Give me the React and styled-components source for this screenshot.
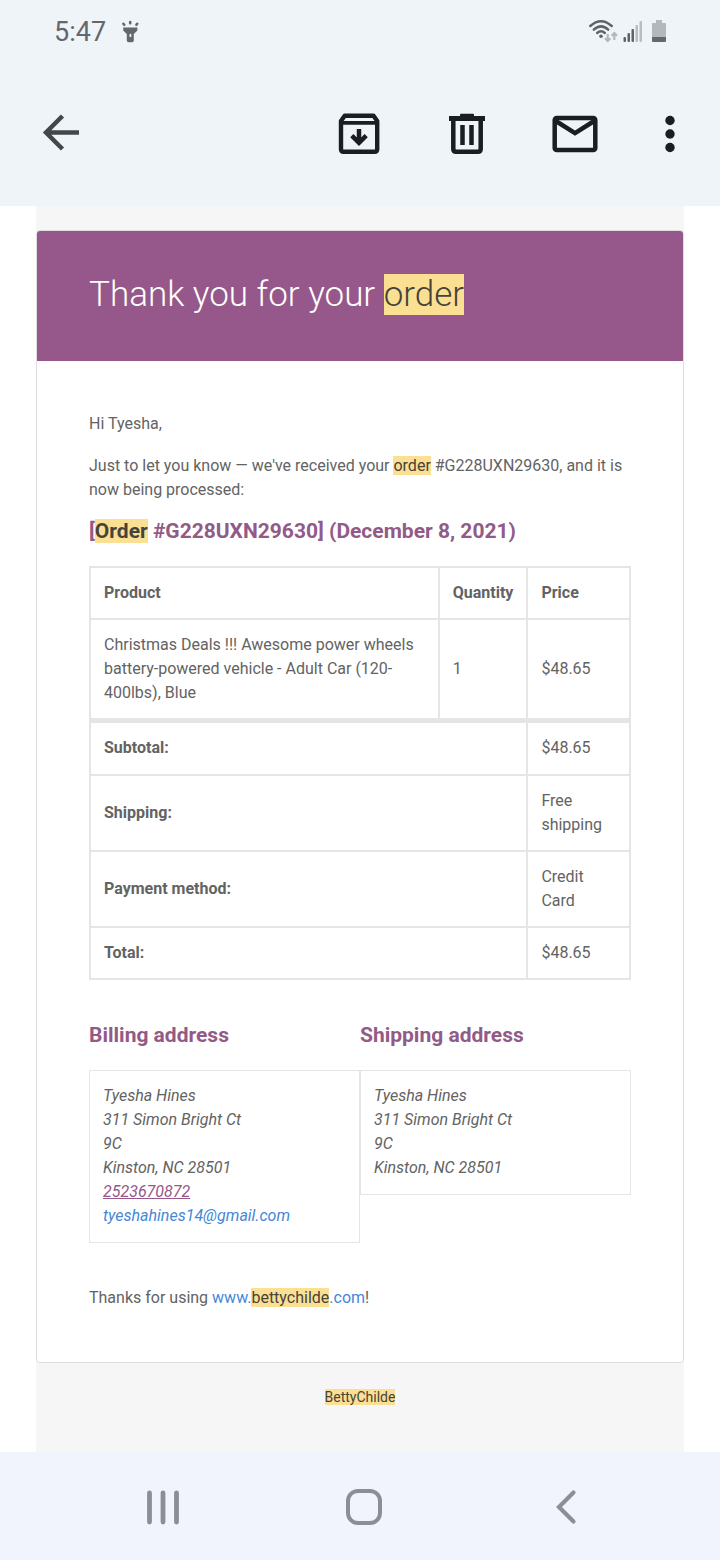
import React from 'react';
import styled, { createGlobalStyle } from 'styled-components';

const GlobalStyle = createGlobalStyle`
  * {
    box-sizing: border-box;
  }
  body {
    margin: 0;
    background: #fff;
    color: #636363;
    font-family: Roboto, 'Liberation Sans', sans-serif;
    font-size: 16px;
    line-height: 24px;
  }
  p {
    margin: 0 0 18px;
  }
`;

const Screen = styled.div`
  display: flex;
  flex-direction: column;
  min-height: 100vh;
`;

const TopArea = styled.header`
  background: #eff4f9;
  padding-bottom: 48px;
`;

const StatusBar = styled.div`
  display: flex;
  justify-content: space-between;
  align-items: center;
  height: 64px;
  padding: 0 53px 0 54px;
  color: #64676b;
`;

const StatusGroup = styled.div`
  display: flex;
  align-items: center;
  gap: ${(props) => props.$gap}px;
`;

const Clock = styled.span`
  font-size: 27px;
  line-height: 32px;
`;

const Toolbar = styled.div`
  display: flex;
  align-items: center;
  gap: 60px;
  padding: 46px 39px 0 37px;
`;

const IconButton = styled.button`
  display: flex;
  padding: 0;
  border: 0;
  background: none;
  color: ${(props) => props.$color || '#1b1e21'};
  cursor: pointer;

  &.back {
    margin-right: auto;
  }
`;

const Mail = styled.main`
  flex: 1;
  margin: 0 5%;
  padding-top: 24px;
  background: #f6f6f6;
`;

const Card = styled.article`
  border: 1px solid #dedede;
  border-radius: 4px;
  background: #fff;
  overflow: hidden;
`;

const Banner = styled.div`
  padding: 38px 52px 41px;
  background: #96588a;
`;

const Title = styled.h1`
  margin: 0;
  color: #fff;
  font-size: 35px;
  font-weight: 300;
  line-height: 51px;
`;

const CardBody = styled.div`
  padding: 51px 52px 34px;
`;

const Heading = styled.h2`
  margin: 0 0 24px;
  color: #925a87;
  font-size: 21px;
  font-weight: 700;
  line-height: 22px;
`;

const Mark = styled.mark`
  background: #fbe094;
  color: #47433a;
`;

const OrderTable = styled.table`
  width: 100%;
  margin-bottom: 44px;
  border: 1px solid #e5e5e5;
  border-spacing: 0;

  th,
  td {
    padding: 13px;
    border: 1px solid #e5e5e5;
    text-align: left;
    vertical-align: middle;
  }
  .price {
    width: 19%;
  }
  .quantity {
    width: 16%;
  }
  tfoot tr:first-child > * {
    border-top-width: 4px;
    padding-bottom: 14px;
  }
`;

const Addresses = styled.div`
  display: grid;
  grid-template-columns: 1fr 1fr;
  align-items: start;
  margin-bottom: 43px;
`;

const Address = styled.address`
  padding: 13px 13px 14px;
  border: 1px solid #e5e5e5;
`;

const Link = styled.a`
  color: #4687d6;
  text-decoration: none;
`;

const PhoneLink = styled.a`
  color: #96588a;
`;

const MailFooter = styled.footer`
  padding: 22px 0;
  font-size: 14px;
  text-align: center;
`;

const NavBar = styled.nav`
  display: flex;
  justify-content: space-between;
  align-items: center;
  height: 108px;
  padding: 0 130px 0 139px;
  background: #f1f4fd;
`;

const totals = [
  { label: 'Subtotal:', value: '$48.65' },
  { label: 'Shipping:', value: 'Free shipping' },
  { label: 'Payment method:', value: 'Credit Card' },
  { label: 'Total:', value: '$48.65' },
];

const addressLines = [
  'Tyesha Hines',
  '311 Simon Bright Ct',
  '9C',
  'Kinston, NC 28501',
];

const FlashlightIcon = () => (
  <svg width="20" height="24" viewBox="0 0 20 24" fill="currentColor">
    <path d="M3.200 7.500h14.200v3L13.800 14v6.500q0 1.700-1.700 1.700H8.500q-1.700 0-1.700-1.700V14L3.200 10.500z" />
    <rect x="9.500" y="13.800" width="1.800" height="3.400" rx="0.900" fill="#eff4f9" />
    <path
      d="M10.200 2v1.200M3.400 3.800l.8 1M17.200 3.800l-.8 1"
      stroke="currentColor"
      strokeWidth="2.600"
      strokeLinecap="round"
    />
  </svg>
);

const WifiIcon = () => (
  <svg width="30" height="26" viewBox="0 0 30 26" fill="none">
    <g stroke="#5f6266" strokeWidth="2.500" strokeLinecap="round">
      <path d="M2.300 7Q13 -2.600 23.700 7" />
      <path d="M5.800 10.700Q13 4 20.200 10.700" />
      <path d="M9.200 14Q13 10.600 16.800 14" />
    </g>
    <circle cx="13" cy="17.300" r="1.800" fill="#5f6266" />
    <path
      d="M19.700 15v6.500M17 19.300l2.700 2.700 2.700-2.700M26.300 21v-6.500M23.600 16.700L26.300 14l2.700 2.700"
      stroke="#b4b7bc"
      strokeWidth="2.200"
    />
  </svg>
);

const SignalIcon = () => (
  <svg width="25" height="24" viewBox="0 0 25 24">
    <g fill="#5f6266">
      <rect x="1.500" y="17" width="2.500" height="5" rx="1" />
      <rect x="5.500" y="13" width="2.500" height="9" rx="1" />
      <rect x="9.500" y="9" width="2.500" height="13" rx="1" />
    </g>
    <g fill="#b9bcc1">
      <rect x="13.500" y="5" width="2.500" height="17" rx="1" />
      <rect x="17.500" y="1" width="2.500" height="21" rx="1" />
    </g>
  </svg>
);

const BatteryIcon = () => (
  <svg width="16" height="24" viewBox="0 0 16 24">
    <path d="M5 0h6v3h3q1 0 1 1v13H1V4q0-1 1-1h3z" fill="#b4b7bc" />
    <path d="M1 17h14v4q0 1-1 1H2q-1 0-1-1z" fill="#64676b" />
  </svg>
);

const BackIcon = () => (
  <svg width="48" height="48" viewBox="0 0 48 48" fill="none">
    <path
      d="M42 22.500H9M25.500 6L9 22.500 25.500 39"
      stroke="currentColor"
      strokeWidth="4.500"
    />
  </svg>
);

const ArchiveIcon = () => (
  <svg width="48" height="48" viewBox="0 0 48 48" fill="none">
    <path
      d="M6 11v28.200q0 2.600 2.600 2.600h31q2.600 0 2.600-2.600V11l-3.700-5.200H9.700z"
      stroke="currentColor"
      strokeWidth="4.400"
      strokeLinejoin="round"
    />
    <path d="M6 12.800h36" stroke="currentColor" strokeWidth="3.800" />
    <path
      d="M24 19v14M16.800 25.700l7.200 7.200 7.200-7.200"
      stroke="currentColor"
      strokeWidth="4.500"
    />
  </svg>
);

const TrashIcon = () => (
  <svg width="48" height="48" viewBox="0 0 48 48" fill="none">
    <path d="M17 6V4.700q0-1 1-1h12q1 0 1 1V6h11v5H6V6z" fill="currentColor" />
    <path
      d="M10.300 10v29q0 2.700 2.700 2.700h22q2.700 0 2.700-2.700V10M19.500 15v20M28.500 15v20"
      stroke="currentColor"
      strokeWidth="4.500"
    />
  </svg>
);

const EnvelopeIcon = () => (
  <svg width="48" height="48" viewBox="0 0 48 48" fill="none">
    <rect
      x="3.700"
      y="8"
      width="40.600"
      height="32"
      rx="2"
      stroke="currentColor"
      strokeWidth="4.500"
    />
    <path d="M4 10.500l20 12.700 20-12.700" stroke="currentColor" strokeWidth="4.500" />
  </svg>
);

const MoreIcon = () => (
  <svg width="22" height="48" viewBox="0 0 22 48" fill="currentColor">
    <circle cx="11" cy="10.500" r="4.700" />
    <circle cx="11" cy="24" r="4.700" />
    <circle cx="11" cy="37.500" r="4.700" />
  </svg>
);

const RecentIcon = () => (
  <svg width="48" height="48" viewBox="0 0 48 48" fill="none">
    <path
      d="M10.500 11v29M24 11v29M37.500 11v29"
      stroke="currentColor"
      strokeWidth="4.800"
      strokeLinecap="round"
    />
  </svg>
);

const HomeIcon = () => (
  <svg width="48" height="48" viewBox="0 0 48 48" fill="none">
    <rect
      x="7"
      y="9"
      width="32"
      height="32"
      rx="10"
      stroke="currentColor"
      strokeWidth="4"
    />
  </svg>
);

const NavBackIcon = () => (
  <svg width="48" height="48" viewBox="0 0 48 48" fill="none">
    <path
      d="M31.500 10.500L17 25l14.500 14.500"
      stroke="currentColor"
      strokeWidth="4.200"
      strokeLinecap="round"
    />
  </svg>
);

const OrderSummary = () => (
  <OrderTable>
    <thead>
      <tr>
        <th scope="col">Product</th>
        <th scope="col" className="quantity">
          Quantity
        </th>
        <th scope="col" className="price">
          Price
        </th>
      </tr>
    </thead>
    <tbody>
      <tr>
        <td>
          Christmas Deals !!! Awesome power wheels battery-powered vehicle -
          Adult Car (120-400lbs), Blue
        </td>
        <td>1</td>
        <td>$48.65</td>
      </tr>
    </tbody>
    <tfoot>
      {totals.map((item) => (
        <tr key={item.label}>
          <th scope="row" colSpan="2">
            {item.label}
          </th>
          <td>{item.value}</td>
        </tr>
      ))}
    </tfoot>
  </OrderTable>
);

const AddressBlock = ({ title, children }) => (
  <section>
    <Heading>{title}</Heading>
    <Address>
      {addressLines.map((line) => (
        <div key={line}>{line}</div>
      ))}
      {children}
    </Address>
  </section>
);

const App = () => {
  return (
    <Screen>
      <GlobalStyle />
      <TopArea>
        <StatusBar>
          <StatusGroup $gap={14}>
            <Clock>5:47</Clock>
            <FlashlightIcon />
          </StatusGroup>
          <StatusGroup $gap={4}>
            <WifiIcon />
            <SignalIcon />
            <BatteryIcon />
          </StatusGroup>
        </StatusBar>
        <Toolbar>
          <IconButton className="back" $color="#43474a" aria-label="Back">
            <BackIcon />
          </IconButton>
          <IconButton aria-label="Archive">
            <ArchiveIcon />
          </IconButton>
          <IconButton aria-label="Delete">
            <TrashIcon />
          </IconButton>
          <IconButton aria-label="Mark as unread">
            <EnvelopeIcon />
          </IconButton>
          <IconButton aria-label="More options">
            <MoreIcon />
          </IconButton>
        </Toolbar>
      </TopArea>

      <Mail>
        <Card>
          <Banner>
            <Title>
              Thank you for your <Mark>order</Mark>
            </Title>
          </Banner>
          <CardBody>
            <p>Hi Tyesha,</p>
            <p>
              Just to let you know — we've received your <Mark>order</Mark>{' '}
              #G228UXN29630, and it is now being processed:
            </p>
            <Heading>
              [<Mark>Order</Mark> #G228UXN29630] (December 8, 2021)
            </Heading>
            <OrderSummary />
            <Addresses>
              <AddressBlock title="Billing address">
                <div>
                  <PhoneLink href="tel:2523670872">2523670872</PhoneLink>
                </div>
                <div>
                  <Link href="mailto:tyeshahines14@gmail.com">
                    tyeshahines14@gmail.com
                  </Link>
                </div>
              </AddressBlock>
              <AddressBlock title="Shipping address" />
            </Addresses>
            <p>
              Thanks for using{' '}
              <Link href="#">
                www.<Mark>bettychilde</Mark>.com
              </Link>
              !
            </p>
          </CardBody>
        </Card>
        <MailFooter>
          <Mark>BettyChilde</Mark>
        </MailFooter>
      </Mail>

      <NavBar>
        <IconButton $color="#8b8f95" aria-label="Recent apps">
          <RecentIcon />
        </IconButton>
        <IconButton $color="#8b8f95" aria-label="Home">
          <HomeIcon />
        </IconButton>
        <IconButton $color="#8b8f95" aria-label="Go back">
          <NavBackIcon />
        </IconButton>
      </NavBar>
    </Screen>
  );
};

export default App;
